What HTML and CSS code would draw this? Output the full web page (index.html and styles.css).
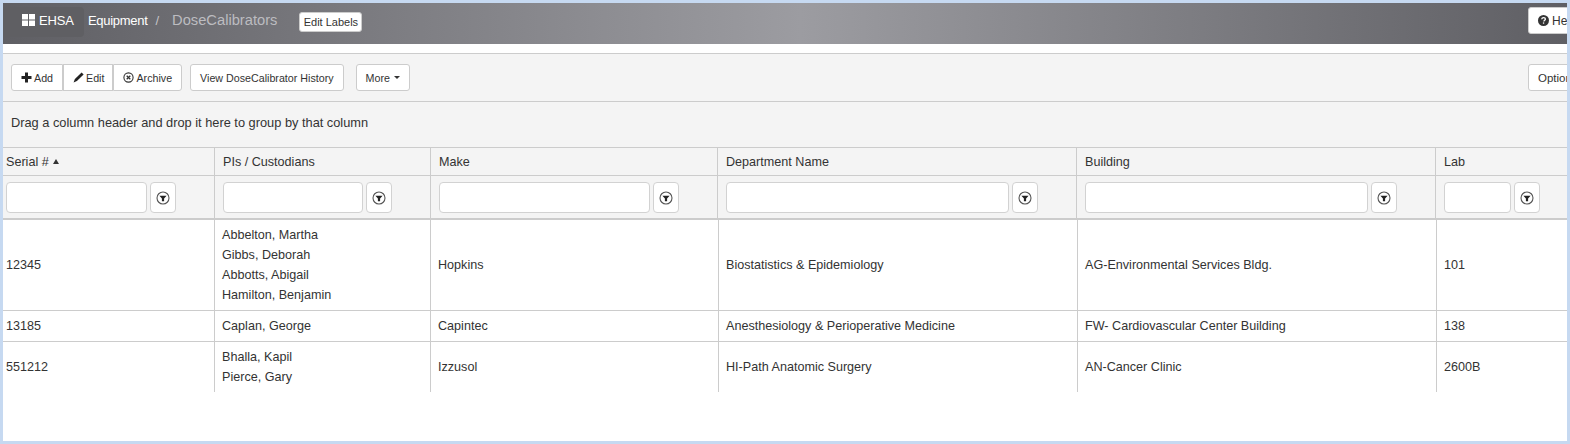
FILE: index.html
```html
<!DOCTYPE html>
<html lang="en">
<head>
<meta charset="utf-8">
<title>EHSA Equipment - DoseCalibrators</title>
<link rel="stylesheet" href="styles.css">
</head>
<body>
<div class="frame">
  <header class="topbar">
    <a class="brand">
      <svg class="brand-icon" width="13" height="12" viewBox="0 0 13 12"><path fill="#fff" d="M0 0h6v5.500H0zM7 0h6v5.500H7zM0 6.500h6V12H0zM7 6.500h6V12H7z"/></svg>
      <span>EHSA</span>
    </a>
    <span class="crumb">Equipment</span>
    <span class="sep">/</span>
    <span class="crumb-current">DoseCalibrators</span>
    <button class="edit-labels">Edit Labels</button>
    <button class="help">
      <svg width="11" height="11" viewBox="0 0 11 11"><circle cx="5.500" cy="5.500" r="5.500" fill="#333"/><path d="M3.700 4.200c.1-1 .9-1.600 1.900-1.600s1.800.6 1.800 1.500c0 1.200-1.500 1.200-1.500 2.300" fill="none" stroke="#fff" stroke-width="1.300"/><rect x="4.900" y="7.400" width="1.300" height="1.300" fill="#fff"/></svg>
      <span>Help</span>
    </button>
  </header>
  <div class="toolbar">
    <div class="btn-group">
      <button class="btn">
        <svg width="11" height="11" viewBox="0 0 11 11"><path fill="#222" d="M4 .5h3V4h3.500v3H7v3.500H4V7H.5V4H4z"/></svg>
        Add
      </button>
      <button class="btn btn-edit">
        <svg width="11" height="11" viewBox="0 0 11 11"><path fill="#222" d="M8.600.4l2 2-6.700 6.700-3.300 1.300 1.300-3.300z"/></svg>
        Edit
      </button>
      <button class="btn">
        <svg width="11" height="11" viewBox="0 0 11 11"><circle cx="5.500" cy="5.500" r="4.600" fill="none" stroke="#333" stroke-width="1.100"/><path d="M3.700 3.700l3.600 3.600M7.300 3.700L3.700 7.300" stroke="#333" stroke-width="1.300"/></svg>
        Archive
      </button>
    </div>
    <button class="btn btn-single">View DoseCalibrator History</button>
    <button class="btn btn-single btn-more">More <i class="caret"></i></button>
    <button class="btn btn-single btn-options">Options</button>
  </div>
  <div class="group-panel">Drag a column header and drop it here to group by that column</div>
  <table class="grid grid-head">
    <colgroup>
      <col class="h1"><col class="h2"><col class="h3"><col class="h4"><col class="h5"><col class="h6">
    </colgroup>
    <thead>
      <tr class="head-row">
        <th class="first">Serial # <i class="sort-up"></i></th>
        <th>PIs / Custodians</th>
        <th>Make</th>
        <th>Department Name</th>
        <th>Building</th>
        <th>Lab</th>
      </tr>
      <tr class="filter-row">
        <th class="first"><div class="filter"><input class="filter-input" type="text" aria-label="Serial filter"><button class="filter-btn" aria-label="Filter"><svg width="14" height="14" viewBox="0 0 14 14"><circle cx="7" cy="7" r="6" fill="none" stroke="#555" stroke-width="1.100"/><path fill="#222" d="M3.400 4.700h7.200L8.100 7.600v2.700H5.900V7.600z"/></svg></button></div></th>
        <th><div class="filter"><input class="filter-input" type="text" aria-label="Custodian filter"><button class="filter-btn" aria-label="Filter"><svg width="14" height="14" viewBox="0 0 14 14"><circle cx="7" cy="7" r="6" fill="none" stroke="#555" stroke-width="1.100"/><path fill="#222" d="M3.400 4.700h7.200L8.100 7.600v2.700H5.900V7.600z"/></svg></button></div></th>
        <th><div class="filter"><input class="filter-input" type="text" aria-label="Make filter"><button class="filter-btn" aria-label="Filter"><svg width="14" height="14" viewBox="0 0 14 14"><circle cx="7" cy="7" r="6" fill="none" stroke="#555" stroke-width="1.100"/><path fill="#222" d="M3.400 4.700h7.200L8.100 7.600v2.700H5.900V7.600z"/></svg></button></div></th>
        <th><div class="filter"><input class="filter-input" type="text" aria-label="Department filter"><button class="filter-btn" aria-label="Filter"><svg width="14" height="14" viewBox="0 0 14 14"><circle cx="7" cy="7" r="6" fill="none" stroke="#555" stroke-width="1.100"/><path fill="#222" d="M3.400 4.700h7.200L8.100 7.600v2.700H5.900V7.600z"/></svg></button></div></th>
        <th><div class="filter"><input class="filter-input" type="text" aria-label="Building filter"><button class="filter-btn" aria-label="Filter"><svg width="14" height="14" viewBox="0 0 14 14"><circle cx="7" cy="7" r="6" fill="none" stroke="#555" stroke-width="1.100"/><path fill="#222" d="M3.400 4.700h7.200L8.100 7.600v2.700H5.900V7.600z"/></svg></button></div></th>
        <th><div class="filter filter-narrow"><input class="filter-input" type="text" aria-label="Lab filter"><button class="filter-btn" aria-label="Filter"><svg width="14" height="14" viewBox="0 0 14 14"><circle cx="7" cy="7" r="6" fill="none" stroke="#555" stroke-width="1.100"/><path fill="#222" d="M3.400 4.700h7.200L8.100 7.600v2.700H5.900V7.600z"/></svg></button></div></th>
      </tr>
    </thead>
  </table>
  <table class="grid grid-body">
    <colgroup>
      <col class="b1"><col class="b2"><col class="b3"><col class="b4"><col class="b5"><col class="b6">
    </colgroup>
    <tbody>
      <tr class="r1">
        <td class="first">12345</td>
        <td><div class="pi">Abbelton, Martha</div><div class="pi">Gibbs, Deborah</div><div class="pi">Abbotts, Abigail</div><div class="pi">Hamilton, Benjamin</div></td>
        <td>Hopkins</td>
        <td>Biostatistics &amp; Epidemiology</td>
        <td>AG-Environmental Services Bldg.</td>
        <td>101</td>
      </tr>
      <tr class="r2">
        <td class="first">13185</td>
        <td><div class="pi">Caplan, George</div></td>
        <td>Capintec</td>
        <td>Anesthesiology &amp; Perioperative Medicine</td>
        <td>FW- Cardiovascular Center Building</td>
        <td>138</td>
      </tr>
      <tr class="r3">
        <td class="first">551212</td>
        <td><div class="pi">Bhalla, Kapil</div><div class="pi">Pierce, Gary</div></td>
        <td>Izzusol</td>
        <td>HI-Path Anatomic Surgery</td>
        <td>AN-Cancer Clinic</td>
        <td>2600B</td>
      </tr>
    </tbody>
  </table>
</div>
</body>
</html>
```
FILE: styles.css
```css
* { box-sizing: border-box; }
html, body { margin: 0; padding: 0; }
body {
  width: 1570px;
  height: 444px;
  overflow: hidden;
  background: #fff;
  font-family: "Liberation Sans", Arial, sans-serif;
  font-size: 12px;
  color: #333;
}
.frame {
  width: 1570px;
  height: 444px;
  border: 3px solid #c6d9f1;
  overflow: hidden;
  background: #fff;
}
button { font-family: inherit; }

.topbar {
  position: relative;
  height: 41px;
  display: flex;
  align-items: flex-start;
  background: linear-gradient(90deg, #5f5f64 0%, #9c9ca1 51%, #5f5f64 100%);
  color: #fff;
}
.brand {
  width: 81px;
  height: 30px;
  margin-top: 4px;
  padding: 0 0 4px 19px;
  display: flex;
  align-items: center;
  gap: 4px;
  font-size: 13px;
  border-radius: 0 4px 4px 0;
  background: #5f5f63;
  letter-spacing: -0.2px;
}
.crumb {
  margin-left: 4px;
  margin-top: 10px;
  font-size: 13px;
  line-height: 16px;
  letter-spacing: -0.3px;
}
.sep { margin: 10px 13px 0 8px; font-size: 13px; line-height: 16px; color: #c4c4c8; }
.crumb-current { margin-top: 9px; font-size: 14.7px; line-height: 17px; color: #bcbcc0; }
.edit-labels {
  margin: 9px 0 0 22px;
  width: 63px;
  height: 20px;
  padding: 0;
  font-size: 11px;
  background: #fff;
  border: 1px solid #ccc;
  border-radius: 3px;
  color: #333;
}
.help {
  position: absolute;
  left: 1525px;
  top: 4px;
  width: 60px;
  height: 27px;
  padding: 0 0 0 9px;
  display: flex;
  align-items: center;
  gap: 3px;
  font-size: 12px;
  background: #fff;
  border: 1px solid #ccc;
  border-radius: 3px;
  color: #333;
}

.toolbar {
  position: relative;
  margin-top: 9px;
  height: 49px;
  display: flex;
  align-items: flex-start;
  padding: 10px 0 0 8px;
  background: #f4f4f4;
  border-top: 1px solid #ccc;
  border-bottom: 1px solid #ccc;
}
.btn-group { display: flex; }
.btn {
  height: 27px;
  padding: 0 9px;
  display: flex;
  align-items: center;
  gap: 2px;
  font-size: 10.7px;
  color: #333;
  background: #fff;
  border: 1px solid #ccc;
  white-space: nowrap;
}
.btn-edit { padding-right: 8px; }
.btn-group .btn:first-child { border-radius: 3px 0 0 3px; }
.btn-group .btn:last-child { border-radius: 0 3px 3px 0; }
.btn-single { border-radius: 3px; margin-left: 8px; }
.btn-more { margin-left: 12px; gap: 4px; }
.caret {
  display: inline-block;
  border-top: 3px solid #333;
  border-left: 3px solid transparent;
  border-right: 3px solid transparent;
}
.btn-options {
  position: absolute;
  left: 1525px;
  top: 10px;
  margin: 0;
  width: 60px;
  justify-content: flex-start;
  font-size: 11.5px;
}

.group-panel {
  height: 46px;
  padding: 0 8px;
  line-height: 41px;
  font-size: 12.8px;
  background: #f4f4f4;
  border-bottom: 1px solid #ccc;
}

.grid {
  width: 1564px;
  table-layout: fixed;
  border-collapse: separate;
  border-spacing: 0;
  font-size: 12.6px;
}
.h1, .b1 { width: 211px; }
.h2, .b2 { width: 216px; }
.h3 { width: 287px; }
.b3 { width: 288px; }
.h4, .b4 { width: 359px; }
.h5, .b5 { width: 359px; }
.h6 { width: 132px; }
.b6 { width: 131px; }

.grid th {
  background: #f4f4f4;
  font-weight: 400;
  text-align: left;
  padding: 0 8px;
  border-left: 1px solid #ccc;
  border-bottom: 1px solid #ccc;
}
.grid th.first, .grid td.first { border-left: 0; padding-left: 3px; }
.head-row th { height: 28px; }
.filter-row th { height: 44px; border-bottom-width: 2px; }
.filter { display: flex; gap: 3px; align-items: center; padding: 1px 30px 0 0; }
.filter-input {
  flex: 1 1 auto;
  min-width: 0;
  height: 31px;
  background: #fff;
  border: 1px solid #d2d2d2;
  border-radius: 4px;
  padding: 0 6px;
}
.filter-btn {
  flex: 0 0 26px;
  width: 26px;
  height: 31px;
  padding: 0;
  display: flex;
  align-items: center;
  justify-content: center;
  background: #fff;
  border: 1px solid #d2d2d2;
  border-radius: 4px;
}
.filter-narrow { padding-right: 0; }
.filter-narrow .filter-input { flex: 0 0 67px; }

.grid td {
  padding: 0 7px;
  border-left: 1px solid #ccc;
  border-bottom: 1px solid #ccc;
  vertical-align: middle;
  color: #333;
}
.r1 td { height: 91px; }
.r2 td { height: 31px; }
.r3 td { height: 50px; border-bottom: 0; }
.pi { line-height: 20px; }
.sort-up {
  display: inline-block;
  margin-left: 1px;
  vertical-align: 2px;
  border-bottom: 5px solid #333;
  border-left: 3px solid transparent;
  border-right: 3px solid transparent;
}
```
